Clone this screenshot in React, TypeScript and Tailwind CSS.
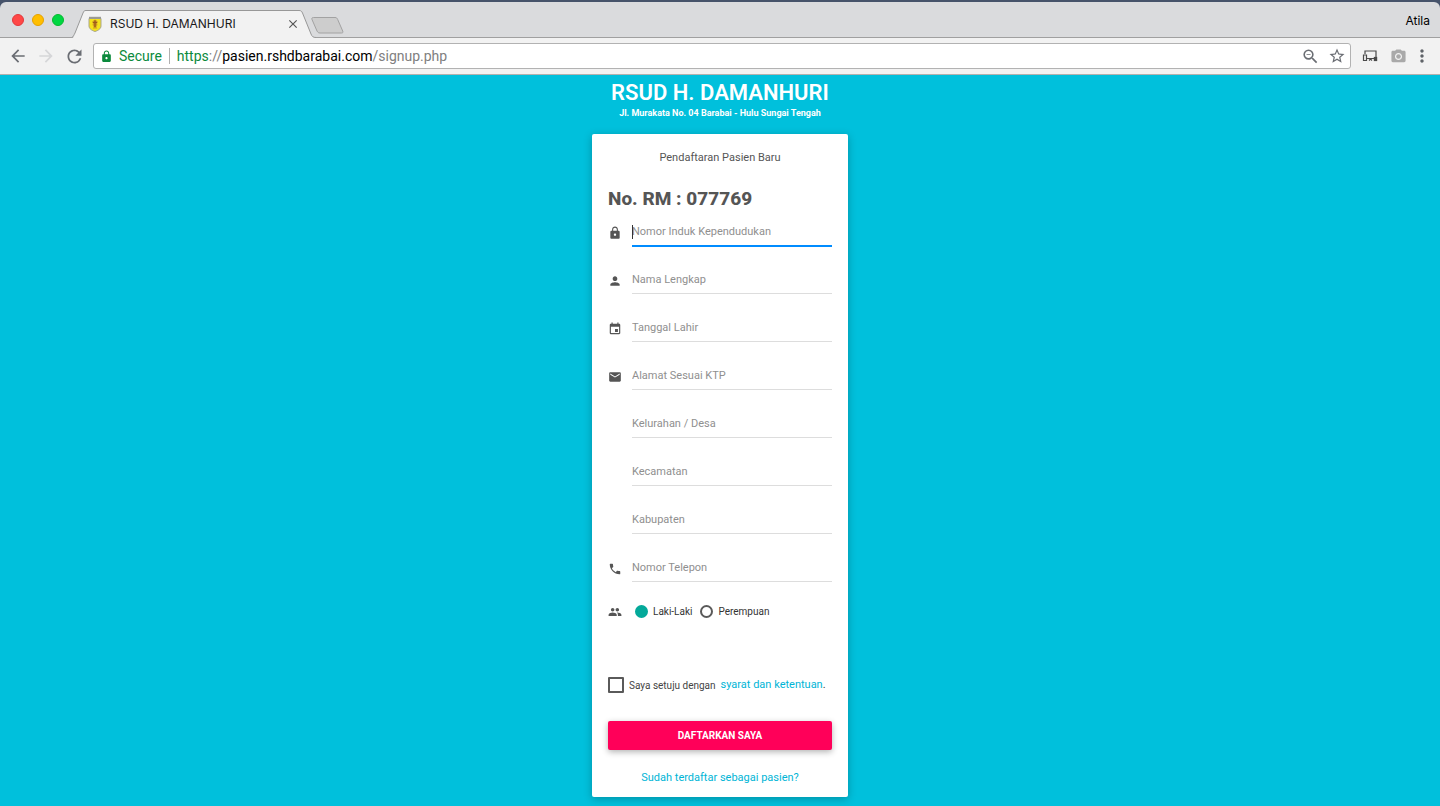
import React from "react";
import {
  MdArrowBack,
  MdArrowForward,
  MdClose,
  MdEmail,
  MdEvent,
  MdGroup,
  MdLock,
  MdMoreVert,
  MdPerson,
  MdPhone,
  MdPhotoCamera,
  MdRefresh,
  MdStarBorder,
  MdZoomOut,
} from "react-icons/md";
import type { IconType } from "react-icons";

type Field = { id: string; label: string; icon?: IconType; active?: boolean };

const fields: Field[] = [
  { id: "nik", label: "Nomor Induk Kependudukan", icon: MdLock, active: true },
  { id: "nama", label: "Nama Lengkap", icon: MdPerson },
  { id: "lahir", label: "Tanggal Lahir", icon: MdEvent },
  { id: "alamat", label: "Alamat Sesuai KTP", icon: MdEmail },
  { id: "kelurahan", label: "Kelurahan / Desa" },
  { id: "kecamatan", label: "Kecamatan" },
  { id: "kabupaten", label: "Kabupaten" },
  { id: "telepon", label: "Nomor Telepon", icon: MdPhone },
];

function Crest() {
  return (
    <svg viewBox="0 0 14 16" className="h-4 w-3.5 shrink-0" aria-hidden="true">
      <path d="M1 2.500h12v7.500c0 2.800-3 4.600-6 5.500-3-.9-6-2.700-6-5.500z" fill="#f5e21b" stroke="#a9a78e" strokeWidth="1" />
      <path d="M1 .8h12v2.200H1z" fill="#9a9a94" />
      <path d="M7 3.500l1.500 1 1.500 1.500-1 1.500 .5 1.500-1 1v1.500l.8 1H4.700l.8-1V10l-1-1 .5-1.500L4 6l1.500-1.500z" fill="#d09a20" />
      <path d="M6.300 4.500h1.400v6.500H6.300zM5 6h4v1H5z" fill="#9c5a1c" />
    </svg>
  );
}

function DevicesIcon() {
  return (
    <svg viewBox="0 0 16 14" className="h-3.5 w-4" fill="none" stroke="#4a4a4a" aria-hidden="true">
      <path d="M3 5V2h11v6" strokeWidth="1.200" />
      <path d="M1.500 6h3v5.500h-3z" strokeWidth="1.200" />
      <path d="M5 9.500h7M7 11.500l1.500-1.500L10 11.500" strokeWidth="1.200" />
      <rect x="12.400" y="8.500" width="2.200" height="3" strokeWidth="1.200" />
    </svg>
  );
}

function TabStrip() {
  return (
    <div className="flex h-9 items-end border-b border-[#a0a0a0] bg-[#dadbdd] rounded-t-md">
      <div className="flex gap-2 self-center pl-3 w-18">
        <button aria-label="Close window" className="size-3 rounded-full border border-[#e2383c] bg-[#ff4746]" />
        <button aria-label="Minimize window" className="size-3 rounded-full border border-[#e5a100] bg-[#ffbe00]" />
        <button aria-label="Maximize window" className="size-3 rounded-full border border-[#06b92f] bg-[#00d742]" />
      </div>
      <div className="relative -mb-px h-7 w-61">
        <svg viewBox="0 0 244 28" preserveAspectRatio="none" className="absolute inset-0 size-full" aria-hidden="true">
          <path d="M0 28C2 28 2 25 3 23L11 3C12 1 12 .5 14 .5H227C229 .5 229.500 1 230.500 3L239 24C240 26.500 241 27.500 244 27.500V28z" fill="#f2f2f2" />
          <path d="M0 27.500C1 27 2 25 3 23L11 3C12 1 12 .5 14 .5H227C229 .5 229.500 1 230.500 3L239 24C240 26.500 241 27.500 244 27.500" fill="none" stroke="#989898" />
        </svg>
        <div className="relative flex h-full items-center pl-4 pr-4">
          <Crest />
          <span className="ml-2 flex-1 font-['Inter',sans-serif] text-[12px] text-[#1a1a1a]">RSUD H. DAMANHURI</span>
          <button aria-label="Close tab" className="text-[#555]">
            <MdClose size={14} />
          </button>
        </div>
      </div>
      <button aria-label="New tab" className="mb-[3px] -ml-[7px]">
        <svg viewBox="0 0 36 18" className="h-4.5 w-9" aria-hidden="true">
          <path d="M4.500 1.500H26c1.500 0 2 .5 2.700 2l5 11.500c.5 1.300.3 2-1.200 2H11c-1.500 0-2.300-.6-3-2L3 3.500c-.5-1.300 0-2 1.500-2z" fill="#cdcdcd" stroke="#a2a2a2" />
        </svg>
      </button>
      <span className="ml-auto self-center pr-2.5 pt-0.5 font-['Inter',sans-serif] text-[12px] text-black">Atila</span>
    </div>
  );
}

function Toolbar() {
  return (
    <div className="flex h-[37px] items-center border-b border-[#b4b0ae] bg-[#f2f2f2] pl-2 pr-2">
      <button aria-label="Back" className="mr-2 text-[#6a6d73]"><MdArrowBack size={20} /></button>
      <button aria-label="Forward" className="mr-2 text-[#d5d6d8]"><MdArrowForward size={20} /></button>
      <button aria-label="Reload" className="mr-2 text-[#6a6d73]"><MdRefresh size={21} /></button>
      <div className="flex h-[26px] flex-1 items-center rounded-[3px] border border-[#b2b2b2] bg-white pl-1.5 pr-1 text-[14px]">
        <MdLock size={13} className="mr-1.5 text-[#0b8a3c]" />
        <span className="text-[#0b8a3c]">Secure</span>
        <span className="mx-[7px] h-4 w-px bg-[#b0b0b0]" />
        <div role="textbox" aria-label="Address" className="flex-1 text-[#808080]">
          <span className="text-[#0b8a3c]">https</span>://<span className="text-black">pasien.rshdbarabai.com</span>/signup.php
        </div>
        <button aria-label="Zoom" className="mr-2 text-[#6a6d73]"><MdZoomOut size={19} /></button>
        <button aria-label="Bookmark" className="text-[#6a6d73]"><MdStarBorder size={18} /></button>
      </div>
      <button aria-label="Devices" className="ml-[11px]"><DevicesIcon /></button>
      <button aria-label="Screenshot" className="ml-3 text-[#a9a9a9]"><MdPhotoCamera size={17} /></button>
      <button aria-label="Menu" className="ml-[5px] text-[#5f6368]"><MdMoreVert size={20} /></button>
    </div>
  );
}

function FieldRow({ id, label, icon: Icon, active }: Field) {
  return (
    <div className="mb-[19px] flex">
      <span className="flex w-6 items-center pt-[3px]">{Icon && <Icon size={14} />}</span>
      <div className="relative flex-1">
        <input
          id={id}
          aria-label={label}
          placeholder={label}
          className="block h-[29px] w-full border-b border-[#ddd] bg-transparent text-[11px] outline-none placeholder:text-[#8f8f8f]"
        />
        {active && (
          <>
            <span className="absolute left-0 top-2 h-3.5 w-px bg-[#333]" />
            <span className="absolute inset-x-0 -bottom-px h-0.5 bg-[#008cff]" />
          </>
        )}
      </div>
    </div>
  );
}

const radio =
  "size-[13px] appearance-none rounded-full border-2 border-[#5a5a5a] checked:border-[#04a99a] checked:bg-[#04a99a]";

export default function App() {
  return (
    <div className="flex min-h-screen flex-col bg-[#00c0dc] font-['Roboto',sans-serif]">
      <header className="bg-[#46536a] pt-0.5">
        <TabStrip />
        <Toolbar />
      </header>
      <main className="mx-auto w-64 pb-2 text-[11px] text-[#555]">
        <div className="pt-1 text-center text-white">
          <h1 className="text-[22px] leading-7 font-semibold">RSUD H. DAMANHURI</h1>
          <p className="text-[9px] leading-3 font-bold">Jl. Murakata No. 04 Barabai - Hulu Sungai Tengah</p>
        </div>
        <form className="mt-[15px] rounded-xs bg-white px-4 pb-3 pt-4 shadow-[0_2px_8px_rgba(0,0,0,0.25)]">
          <p className="text-center leading-4">Pendaftaran Pasien Baru</p>
          <h2 className="mb-1 mt-[19px] text-[19px] leading-7 font-extrabold">No. RM : 077769</h2>
          {fields.map((field) => (
            <FieldRow key={field.id} {...field} />
          ))}
          <fieldset className="mt-[21px] flex h-4 items-center text-[10px] text-[#333]">
            <span className="flex w-[27px] items-center pt-0.5 text-[#555]"><MdGroup size={14} /></span>
            <label className="mr-2 flex items-center gap-[5px]">
              <input type="radio" name="kelamin" defaultChecked className={radio} />
              Laki-Laki
            </label>
            <label className="flex items-center gap-[5px]">
              <input type="radio" name="kelamin" className={radio} />
              Perempuan
            </label>
          </fieldset>
          <div className="mt-[58px] flex h-4 items-center whitespace-nowrap text-[#444]">
            <input id="setuju" type="checkbox" className="mr-[5px] size-4 appearance-none rounded-[1px] border-2 border-[#5a5a5a]" />
            <label htmlFor="setuju" className="flex items-center gap-[5px]">
              <span className="text-[10px]">Saya setuju dengan</span>
              <span>
                <a href="#syarat" className="text-[#00b5d6]">syarat dan ketentuan</a>.
              </span>
            </label>
          </div>
          <button
            type="button"
            className="mt-7 block h-[29px] w-full rounded-[2px] bg-[#ff0059] text-[10px] font-bold text-white shadow-[0_2px_6px_rgba(0,0,0,0.3)]"
          >
            DAFTARKAN SAYA
          </button>
          <p className="mt-5 -mb-px text-center leading-4">
            <a href="#masuk" className="text-[#00b5d6]">Sudah terdaftar sebagai pasien?</a>
          </p>
        </form>
      </main>
    </div>
  );
}
